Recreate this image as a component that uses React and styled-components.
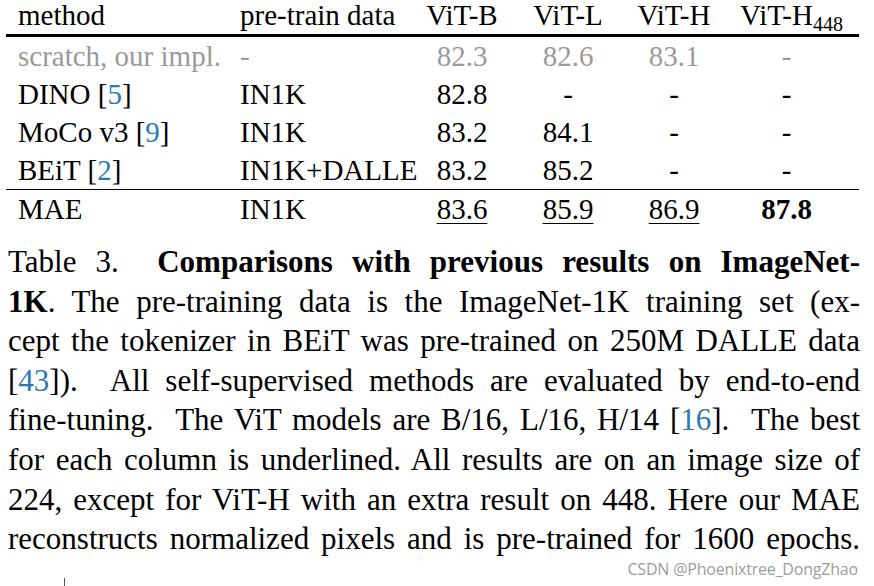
import React from "react";
import styled, { createGlobalStyle } from "styled-components";

const GlobalStyle = createGlobalStyle`
  html, body {
    margin: 0;
    padding: 0;
    background: #ffffff;
  }
  body {
    width: 874px;
    height: 586px;
    overflow: hidden;
  }
`;

const Sheet = styled.div`
  position: relative;
  width: 874px;
  height: 586px;
  font-family: "Liberation Serif", "Times New Roman", serif;
  color: #000;
`;

const Table = styled.div`
  margin-left: 6px;
  width: 853px;
  display: grid;
  grid-template-columns: 222px 184px 100px 112px 100px 135px;
  font-size: 29px;
`;

const HeadCell = styled.div`
  line-height: 30px;
  height: 34px;
  border-bottom: 3px solid #000;
  padding-left: ${(p) => (p.$left ? "12px" : "0")};
  text-align: ${(p) => (p.$left ? "left" : "center")};
  white-space: nowrap;
`;

const Cell = styled.div`
  line-height: 38px;
  height: 38px;
  padding-left: ${(p) => (p.$left ? "12px" : "0")};
  padding-right: ${(p) => (p.$last ? "10px" : "0")};
  text-align: ${(p) => (p.$left ? "left" : "center")};
  color: ${(p) => (p.$muted ? "#9a9a9a" : "#000")};
  border-bottom: ${(p) => (p.$rule ? "1px solid #000" : "none")};
  white-space: nowrap;
`;

const Sub = styled.span`
  font-size: 20px;
  position: relative;
  top: 6px;
`;

const Cite = styled.span`
  color: #2a78b6;
`;

const Best = styled.span`
  text-decoration: underline;
  text-decoration-thickness: 1px;
  text-underline-offset: 4px;
`;

const Bold = styled.b`
  font-weight: 700;
`;

const Caption = styled.div`
  margin-top: 14px;
  margin-left: 8px;
  width: 852px;
  font-size: 31px;
  line-height: 39.6px;
`;

const Line = styled.div`
  text-align: justify;
  text-align-last: justify;
  white-space: nowrap;
`;

const Watermark = styled.div`
  position: absolute;
  right: 16px;
  top: 561px;
  font-family: "Open Sans", "Noto Sans", sans-serif;
  font-size: 16px;
  line-height: 16px;
  color: #9c9c9c;
  letter-spacing: -0.2px;
`;

const Caret = styled.div`
  position: absolute;
  left: 64px;
  top: 578px;
  width: 1px;
  height: 8px;
  background: #555;
`;

const rows = [
  { method: "scratch, our impl.", data: "-", vals: ["82.3", "82.6", "83.1", "-"], muted: true },
  { method: "DINO", cite: "5", data: "IN1K", vals: ["82.8", "-", "-", "-"] },
  { method: "MoCo v3", cite: "9", data: "IN1K", vals: ["83.2", "84.1", "-", "-"] },
  { method: "BEiT", cite: "2", data: "IN1K+DALLE", vals: ["83.2", "85.2", "-", "-"], rule: true },
];

export default function App() {
  return (
    <>
      <GlobalStyle />
      <Sheet>
        <Table>
          <HeadCell $left>method</HeadCell>
          <HeadCell $left>pre-train data</HeadCell>
          <HeadCell>ViT-B</HeadCell>
          <HeadCell>ViT-L</HeadCell>
          <HeadCell>ViT-H</HeadCell>
          <HeadCell>
            ViT-H<Sub>448</Sub>
          </HeadCell>

          {rows.map((r) => (
            <React.Fragment key={r.method}>
              <Cell $left $muted={r.muted} $rule={r.rule}>
                {r.method}
                {r.cite && (
                  <>
                    {" "}[<Cite>{r.cite}</Cite>]
                  </>
                )}
              </Cell>
              <Cell $left $muted={r.muted} $rule={r.rule}>
                {r.data}
              </Cell>
              {r.vals.map((v, i) => (
                <Cell key={i} $last={i === 3} $muted={r.muted} $rule={r.rule}>
                  {v}
                </Cell>
              ))}
            </React.Fragment>
          ))}

          <Cell $left>MAE</Cell>
          <Cell $left>IN1K</Cell>
          <Cell><Best>83.6</Best></Cell>
          <Cell><Best>85.9</Best></Cell>
          <Cell><Best>86.9</Best></Cell>
          <Cell $last><Bold>87.8</Bold></Cell>
        </Table>

        <Caption>
          <Line>
            Table 3. &nbsp;<Bold>Comparisons with previous results on ImageNet-</Bold>
          </Line>
          <Line>
            <Bold>1K</Bold>. The pre-training data is the ImageNet-1K training set (ex-
          </Line>
          <Line>cept the tokenizer in BEiT was pre-trained on 250M DALLE data</Line>
          <Line>
            [<Cite>43</Cite>]). &nbsp;All self-supervised methods are evaluated by end-to-end
          </Line>
          <Line>
            fine-tuning. &nbsp;The ViT models are B/16, L/16, H/14 [<Cite>16</Cite>]. &nbsp;The best
          </Line>
          <Line>for each column is underlined. All results are on an image size of</Line>
          <Line>224, except for ViT-H with an extra result on 448. Here our MAE</Line>
          <Line>reconstructs normalized pixels and is pre-trained for 1600 epochs.</Line>
        </Caption>

        <Watermark>CSDN @Phoenixtree_DongZhao</Watermark>
        <Caret />
      </Sheet>
    </>
  );
}
